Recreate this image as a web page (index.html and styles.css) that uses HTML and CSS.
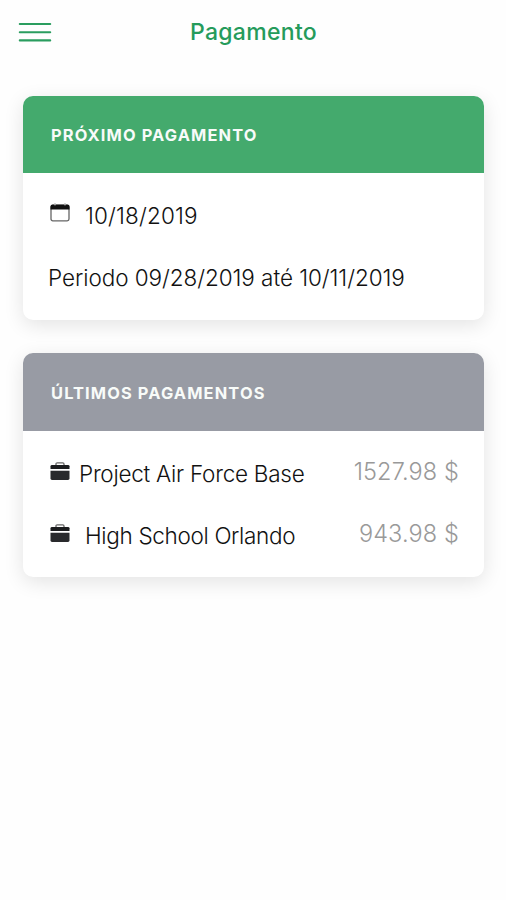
FILE: index.html
```html
<!DOCTYPE html>
<html lang="pt">
<head>
<meta charset="utf-8">
<title>Pagamento</title>
<link rel="stylesheet" href="styles.css">
</head>
<body>
<header class="topbar">
  <svg class="menu" width="34" height="20" viewBox="0 0 34 20" aria-hidden="true">
    <path d="M1.8 2H32.2M1.8 10.2H32.2M1.8 18.4H32.2"/>
  </svg>
  <h1 class="title">Pagamento</h1>
</header>
<main class="cards">
  <section class="card">
    <h2 class="card-head next">PRÓXIMO PAGAMENTO</h2>
    <div class="card-body">
      <div class="row">
        <svg class="icon" width="20" height="20" viewBox="0 0 20 20" aria-hidden="true">
          <rect x="1" y="2.5" width="18" height="15.3" rx="1.8" fill="#fff" stroke="#666" stroke-width="1.3"/>
          <path d="M.5 6.4V3.5Q.5 1.6 2.5 1.6H4Q5 3.8 6 1.6H14Q15 3.8 16 1.6H17.5Q19.5 1.6 19.5 3.5V6.4Z" fill="#111"/>
          <path d="M5 .3V2.4M15 .3V2.4" stroke="#888"/>
        </svg>
        <span class="label date">10/18/2019</span>
      </div>
      <div class="row">
        <span class="label period">Periodo 09/28/2019 até 10/11/2019</span>
      </div>
    </div>
  </section>
  <section class="card">
    <h2 class="card-head last">ÚLTIMOS PAGAMENTOS</h2>
    <div class="card-body history">
      <div class="row">
        <svg class="icon" width="20" height="20" viewBox="0 0 20 20" aria-hidden="true">
          <path d="M6 3V2Q6 .8 7.2 .8H12.8Q14 .8 14 2V3" fill="none" stroke="#666" stroke-width="1.3"/>
          <path d="M2 2.9H18Q19.5 2.9 19.5 4.3V7H.5V4.3Q.5 2.9 2 2.9Z" fill="#1b1c1e"/>
          <path d="M.5 8.7H19.5V16.6Q19.5 18 18 18H2Q.5 18 .5 16.6Z" fill="#292a2d"/>
        </svg>
        <span class="label project">Project Air Force Base</span>
        <span class="amount">1527.98 $</span>
      </div>
      <div class="row">
        <svg class="icon" width="20" height="20" viewBox="0 0 20 20" aria-hidden="true">
          <path d="M6 3V2Q6 .8 7.2 .8H12.8Q14 .8 14 2V3" fill="none" stroke="#666" stroke-width="1.3"/>
          <path d="M2 2.9H18Q19.5 2.9 19.5 4.3V7H.5V4.3Q.5 2.9 2 2.9Z" fill="#1b1c1e"/>
          <path d="M.5 8.7H19.5V16.6Q19.5 18 18 18H2Q.5 18 .5 16.6Z" fill="#292a2d"/>
        </svg>
        <span class="label school">High School Orlando</span>
        <span class="amount">943.98 $</span>
      </div>
    </div>
  </section>
</main>
</body>
</html>
```
FILE: styles.css
```css
* { box-sizing: border-box; }
body {
  margin: 0;
  min-height: 900px;
  background: #fefefe;
  font-family: Inter, "Liberation Sans", sans-serif;
}
.topbar {
  display: grid;
  grid-template-columns: 34px 1fr 34px;
  align-items: center;
  height: 64px;
  padding: 0 18px;
}
.menu { fill: none; stroke: #2a9d5f; stroke-width: 2.1; stroke-linecap: round; }
.title {
  margin: 0;
  padding-left: 1px;
  text-align: center;
  font-size: 23px;
  font-weight: 500;
  line-height: 28px;
  letter-spacing: .3px;
  color: #259b5b;
}
.cards {
  display: flex;
  flex-direction: column;
  gap: 33.9px;
  padding: 32px 22px 0 23px;
}
.card {
  height: 223.5px;
  border-radius: 10px;
  background: #fff;
  box-shadow: 0 5px 20px rgba(0, 0, 0, .11);
}
.card-head {
  display: flex;
  align-items: center;
  height: 77.3px;
  margin: 0;
  padding: 1px 28px 0;
  border-radius: 10px 10px 0 0;
  font-size: 16.4px;
  font-weight: 700;
  letter-spacing: 1.13px;
  color: #f8fbf9;
}
.next { background: #44aa6d; }
.last { background: #989ba4; }
.card-body { padding: 11.2px 25px 0; }
.history { padding-top: 12.2px; }
.row { display: flex; align-items: center; height: 62px; }
.icon { flex: none; margin: 0 0 4px 2px; }
.label { font-size: 22.5px; font-weight: 300; color: #111; white-space: nowrap; }
.date { margin-left: 15px; letter-spacing: .15px; }
.period { letter-spacing: -.06px; }
.project { margin-left: 9px; letter-spacing: -.25px; }
.school { margin-left: 15px; letter-spacing: -.33px; }
.amount {
  margin: 0 0 4px auto;
  font-size: 23.5px;
  font-weight: 300;
  letter-spacing: .12px;
  color: #999;
  white-space: nowrap;
}
```
